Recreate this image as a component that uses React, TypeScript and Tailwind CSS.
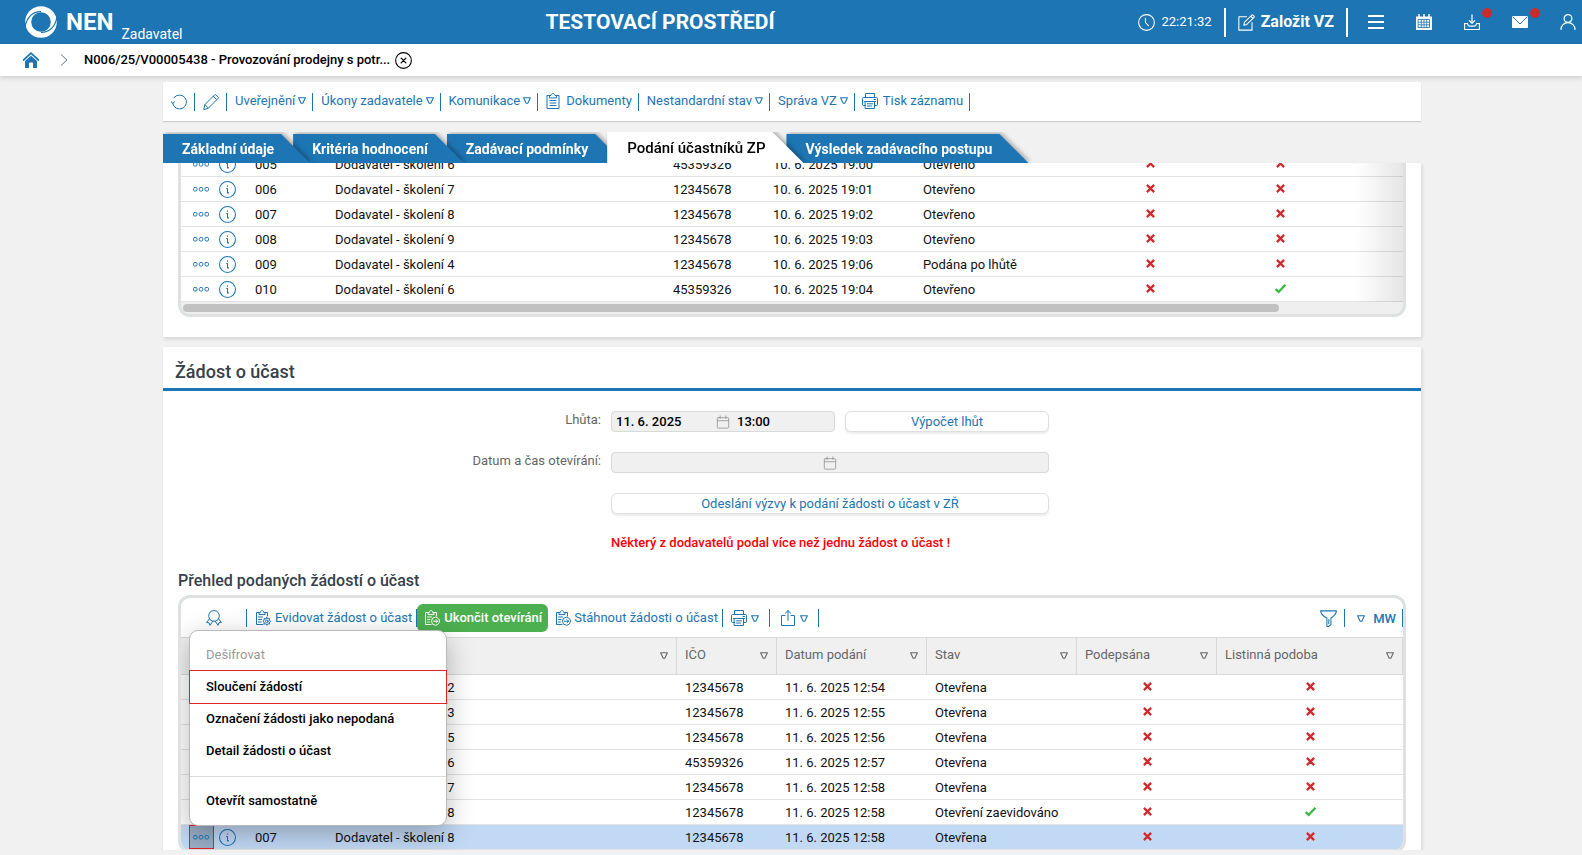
import type { ReactNode } from "react";
import clsx from "clsx";

type IconProps = { className?: string };

function Icon({ className, children }: { className?: string; children: ReactNode }) {
  return (
    <svg
      viewBox="0 0 16 16"
      className={clsx("shrink-0", className || "size-4")}
      fill="none"
      stroke="currentColor"
      strokeLinecap="round"
      strokeLinejoin="round"
      aria-hidden="true"
    >
      {children}
    </svg>
  );
}

const Triangle = ({ className }: IconProps) => (
  <svg viewBox="0 0 8 7" className={clsx("h-[7px] w-2 shrink-0", className)} fill="none" stroke="currentColor" strokeWidth="1.1" strokeLinejoin="round" aria-hidden="true">
    <path d="M.6.8h6.8L4.8 6.2H3.200z" />
  </svg>
);

const RefreshIcon = () => (
  <Icon>
    <path d="M1.6 9.4A7 7 0 1 0 3 3.6M1.6 9.4 0 7.4M1.6 9.4 3.6 7.8" />
  </Icon>
);

const PencilIcon = () => (
  <Icon>
    <path d="M.8 15.2l1.1-4.6L11.6.9c.4-.4 1-.4 1.4 0l2.1 2.1c.4.4.4 1 0 1.4L5.4 14.1zM10.2 2.3l3.5 3.5M1.9 10.6l3.5 3.5" />
  </Icon>
);

const ClipboardIcon = () => (
  <Icon>
    <path d="M4.5 2.5H2v13h12v-13h-2.500M4.5 4.500v-2H6C6.300 1.300 7 .5 8 .5s1.700.8 2 2h1.500v2zM5 7.500h6M5 10h6M5 12.500h6" />
  </Icon>
);

const PrinterIcon = () => (
  <Icon>
    <path d="M3.500 4.500v-4h9v4M3.500 12.500h-2c-.6 0-1-.4-1-1v-6c0-.6.4-1 1-1h13c.6 0 1 .4 1 1v6c0 .6-.4 1-1 1h-2M3.500 8.500h9v7h-9zM2.500 8.500h11M5.500 10.800h5M5.500 13h4M12 6.500h1.500" />
  </Icon>
);

const ClipboardGearIcon = () => (
  <Icon>
    <path d="M4 2.500H1.500v12H8M12.500 6V2.500H10M4 4.200V2.500h1.300C5.500 1.300 6 .5 7 .5s1.500.8 1.700 2H10v1.700zM3.500 7h4M3.500 9.500h3M3.500 12h2.500" />
    <circle cx="11.800" cy="11.300" r="1.300" />
    <path d="M11.800 7.300l1 1.500 1.800-.2-.2 1.700 1.300 1-1.300 1 .2 1.700-1.800-.2-1 1.500-1-1.500-1.800.2.200-1.700-1.300-1 1.300-1-.2-1.700 1.800.2z" />
  </Icon>
);

const ClipboardArrowIcon = () => (
  <Icon>
    <path d="M4 2.500H1.500v12H7M12.500 6V2.500H10M4 4.200V2.500h1.300C5.500 1.300 6 .5 7 .5s1.500.8 1.700 2H10v1.700zM3.500 7h4M3.500 9.500h2.500M3.500 12h2" />
    <circle cx="11.500" cy="11.200" r="4" />
    <path d="M9.300 11.200h4.200M12 9.600l1.600 1.600L12 12.800" />
  </Icon>
);

const RibbonIcon = () => (
  <Icon>
    <path d="M4.800 10.300a5.400 5.400 0 1 1 6.400 0M3.500 8.700L.6 12.500l2.500.3.900 2.600 2.800-4.200M12.500 8.700l2.900 3.800-2.500.3-.9 2.600-2.800-4.200M5 10.500c2 1 4 1 6 0" />
  </Icon>
);

const ShareIcon = () => (
  <Icon>
    <path d="M5 5.500H1.500v10h13v-10H11M8 10.500v-10M5.300 3.200L8 .6l2.700 2.600" />
  </Icon>
);

const FilterIcon = () => (
  <Icon className="size-[17px]">
    <path d="M.5.800h15c-.2 2.300-1.700 4.600-5.200 6.700v6.300l-2.300 1.700h-1.500v-8C2.200 5.400.7 3.100.5.800zM8.300 9v4" />
  </Icon>
);

const CalendarIcon = () => (
  <Icon className="size-[14px] text-[#999]">
    <path d="M2.500 3h11c.6 0 1 .4 1 1v10c0 .6-.4 1-1 1h-11c-.6 0-1-.4-1-1V4c0-.6.4-1 1-1zM1.500 6.500h13M4.700 1v3M11.300 1v3" />
  </Icon>
);

const InfoIcon = () => (
  <Icon className="size-[17px]">
    <circle cx="8" cy="8" r="7.500" />
    <path d="M7.200 7H8v4.200h1M8 4.400v.6" />
  </Icon>
);

const DotsIcon = () => (
  <Icon>
    <rect x=".5" y="6.500" width="3.500" height="3.500" rx="1.200" />
    <rect x="6.300" y="6.500" width="3.500" height="3.500" rx="1.200" />
    <rect x="12" y="6.500" width="3.500" height="3.500" rx="1.200" />
  </Icon>
);

const Mark = ({ ok }: { ok?: boolean }) =>
  ok ? (
    <svg viewBox="0 0 10 10" className="mx-auto -mt-1 block size-[11px]" fill="none" stroke="#35b93a" strokeWidth="2" role="img" aria-label="Ano">
      <path d="M.6 5.500l2.700 2.600L9.500 1.600" />
    </svg>
  ) : (
    <svg viewBox="0 0 10 10" className="mx-auto -mt-1 block size-[9px]" fill="none" stroke="#cf2a2e" strokeWidth="2.500" role="img" aria-label="Ne">
      <path d="M1 1l8 8M9 1L1 9" />
    </svg>
  );

const Divider = () => <span className="h-[18px] w-px shrink-0 bg-[#1d75b3]" />;

const toolbar = [
  { label: "Uveřejnění", menu: true },
  { label: "Úkony zadavatele", menu: true },
  { label: "Komunikace", menu: true },
  { label: "Dokumenty", icon: <ClipboardIcon /> },
  { label: "Nestandardní stav", menu: true },
  { label: "Správa VZ", menu: true },
  { label: "Tisk záznamu", icon: <PrinterIcon /> },
];

const tabs = ["Základní údaje", "Kritéria hodnocení", "Zadávací podmínky", "Podání účastníků ZP", "Výsledek zadávacího postupu"];
const tabLayers = ["z-50", "z-40", "z-30", "z-60", "z-20"];

const offers = [
  { no: "005", name: "Dodavatel - školení 6", ico: "45359326", date: "10. 6. 2025 19:00", state: "Otevřeno" },
  { no: "006", name: "Dodavatel - školení 7", ico: "12345678", date: "10. 6. 2025 19:01", state: "Otevřeno" },
  { no: "007", name: "Dodavatel - školení 8", ico: "12345678", date: "10. 6. 2025 19:02", state: "Otevřeno" },
  { no: "008", name: "Dodavatel - školení 9", ico: "12345678", date: "10. 6. 2025 19:03", state: "Otevřeno" },
  { no: "009", name: "Dodavatel - školení 4", ico: "12345678", date: "10. 6. 2025 19:06", state: "Podána po lhůtě" },
  { no: "010", name: "Dodavatel - školení 6", ico: "45359326", date: "10. 6. 2025 19:04", state: "Otevřeno", paper: true },
];

const requests = [
  { no: "001", name: "Dodavatel - školení 2", ico: "12345678", date: "11. 6. 2025 12:54", state: "Otevřena" },
  { no: "002", name: "Dodavatel - školení 3", ico: "12345678", date: "11. 6. 2025 12:55", state: "Otevřena" },
  { no: "003", name: "Dodavatel - školení 5", ico: "12345678", date: "11. 6. 2025 12:56", state: "Otevřena" },
  { no: "004", name: "Dodavatel - školení 6", ico: "45359326", date: "11. 6. 2025 12:57", state: "Otevřena" },
  { no: "005", name: "Dodavatel - školení 7", ico: "12345678", date: "11. 6. 2025 12:58", state: "Otevřena" },
  { no: "006", name: "Dodavatel - školení 8", ico: "12345678", date: "11. 6. 2025 12:58", state: "Otevření zaevidováno", paper: true },
  { no: "007", name: "Dodavatel - školení 8", ico: "12345678", date: "11. 6. 2025 12:58", state: "Otevřena" },
];

function Header() {
  return (
    <header className="flex h-11 shrink-0 items-center justify-between bg-[#1d75b3] pr-[6px] pl-6 text-white">
      <a href="#" className="flex items-center">
        <svg viewBox="0 0 34 34" className="size-[34px]" aria-hidden="true">
          <circle cx="17" cy="17" r="12.800" fill="none" stroke="#fff" strokeWidth="6" />
          <path d="M1 22C2.500 13 8 6.500 17 6.600" fill="none" stroke="#1d75b3" strokeWidth="1.300" />
          <path d="M33 12C31.500 21 26 27.500 17 27.400" fill="none" stroke="#1d75b3" strokeWidth="1.300" />
        </svg>
        <span className="ml-2 text-[24px] leading-7 font-bold">NEN</span>
        <span className="mt-6 ml-2 text-[14px] leading-5">Zadavatel</span>
      </a>
      <strong className="text-[21px] leading-6 font-bold">TESTOVACÍ PROSTŘEDÍ</strong>
      <div className="flex items-center">
        <Icon className="size-[17px]">
          <circle cx="8" cy="8" r="7.400" />
          <path d="M7 4v4l2.800 3" />
        </Icon>
        <span className="ml-[7px] text-[13px]">22:21:32</span>
        <span className="ml-3 h-[29px] w-0.5 bg-white" />
        <button type="button" className="ml-3 flex items-center gap-[6px] text-[16px] leading-5 font-bold">
          <Icon className="size-[17px]">
            <path d="M8 2.500H.8v12.700h12.400V8M5.500 10.500l.7-2.800L13 1c.3-.3.800-.3 1.100 0l1 1c.3.300.3.800 0 1.100L8.300 9.800zM12 2l2 2" />
          </Icon>
          Založit VZ
        </button>
        <span className="ml-3 h-[29px] w-0.5 bg-white" />
        <div className="ml-5 flex items-center gap-8">
          <button type="button" aria-label="Nabídka">
            <Icon>
              <path d="M0 2h16M0 8h16M0 14h16" strokeWidth="2" strokeLinecap="butt" />
            </Icon>
          </button>
          <button type="button" aria-label="Kalendář">
            <Icon>
              <path d="M0 2.500h16V16H0z" fill="#fff" stroke="none" />
              <path d="M3 .5v3M8 .5v3M13 .5v3" strokeWidth="1.500" />
              <path d="M2.500 5.500h11v8h-11zM2.500 8.200h11M2.500 10.800h11M5.300 5.500v8M8 5.500v8M10.700 5.500v8" stroke="#1d75b3" strokeWidth=".8" />
            </Icon>
          </button>
          <button type="button" aria-label="Stažené soubory" className="relative">
            <Icon>
              <path d="M8 .8v8.400M5.300 6.600L8 9.300l2.700-2.700M3.500 9.500H.6v6h14.800v-6h-2.900c-.4 2-1.300 2.700-2.500 2.700H6c-1.200 0-2.100-.7-2.500-2.700z" strokeWidth="1.200" />
            </Icon>
            <span className="absolute -top-[6px] -right-3 size-[10px] rounded-full bg-[#cb2b2e]" />
          </button>
          <button type="button" aria-label="Zprávy" className="relative">
            <Icon>
              <path d="M0 3c0-.5.400-1 1-1h14c.6 0 1 .5 1 1v10c0 .600-.4 1-1 1H1c-.6 0-1-.4-1-1z" fill="#fff" stroke="none" />
              <path d="M1 3l7 7 7-7" stroke="#1d75b3" />
            </Icon>
            <span className="absolute -top-[6px] -right-3 size-[10px] rounded-full bg-[#cb2b2e]" />
          </button>
          <button type="button" aria-label="Uživatel">
            <Icon>
              <circle cx="8" cy="4.500" r="3.900" strokeWidth="1.200" />
              <path d="M1 15.500c0-4 3-6.800 7-6.800s7 2.800 7 6.800" strokeWidth="1.200" />
            </Icon>
          </button>
        </div>
      </div>
    </header>
  );
}

function Breadcrumb() {
  return (
    <nav className="relative z-70 flex h-8 shrink-0 items-center bg-white pl-[23px] text-[13px] font-medium text-black shadow-[0_2px_5px_rgba(0,0,0,0.15)]">
      <a href="#" aria-label="Domů" className="text-[#1d75b3]">
        <svg viewBox="0 0 16 16" className="size-4" aria-hidden="true">
          <path d="M.5 8L8 1.200 15.500 8" fill="none" stroke="currentColor" strokeWidth="1.700" strokeLinecap="round" />
          <path d="M2 9l6-5.300L14 9v7h-4v-4.500c0-.6-.4-1-1-1H7c-.6 0-1 .4-1 1V16H2z" fill="currentColor" />
        </svg>
      </a>
      <svg viewBox="0 0 8 12" className="ml-[21px] h-3 w-2 text-gray-500" fill="none" stroke="currentColor" aria-hidden="true">
        <path d="M1 .5L7 6l-6 5.500" />
      </svg>
      <a href="#" className="ml-4">
        N006/25/V00005438 - Provozování prodejny s potr...
      </a>
      <button type="button" aria-label="Zavřít" className="ml-[5px]">
        <Icon className="size-[17px]">
          <circle cx="8" cy="8" r="7.400" />
          <path d="M5.800 5.800l4.400 4.400M10.200 5.800l-4.400 4.400" strokeWidth="1.200" />
        </Icon>
      </button>
    </nav>
  );
}

function RecordToolbar() {
  return (
    <div className="mt-[6px] flex h-[39px] shrink-0 items-center bg-white pl-2 text-[#1d75b3] shadow-[0_1px_1px_rgba(0,0,0,0.15)]">
      <button type="button" aria-label="Obnovit" className="pr-[7px]">
        <RefreshIcon />
      </button>
      <Divider />
      <button type="button" aria-label="Upravit" className="pr-[7px] pl-2">
        <PencilIcon />
      </button>
      <Divider />
      {toolbar.map((item) => (
        <div key={item.label} className="flex items-center">
          <button
            type="button"
            className={clsx("flex items-center pr-[6px] pb-0.5", item.icon ? "gap-[5px] pl-[7px]" : "gap-[3px] pl-2")}
          >
            {item.icon}
            {item.label}
            {item.menu && <Triangle />}
          </button>
          <Divider />
        </div>
      ))}
    </div>
  );
}

function Tabs() {
  return (
    <div role="tablist" className="mt-[11px] flex h-[31px] shrink-0 items-end overflow-hidden">
      {tabs.map((tab, i) => {
        const active = i === 3;
        return (
          <div
            key={tab}
            className={clsx("relative drop-shadow-[2px_-1px_2px_rgba(0,0,0,0.3)]", tabLayers[i], i > 0 && "-ml-[17px]")}
          >
            <button
              type="button"
              role="tab"
              aria-selected={active}
              className={clsx(
                "block whitespace-nowrap",
                active
                  ? "h-[31px] bg-white pr-[38px] pl-5 text-[15px] font-medium text-black [clip-path:polygon(0_0,calc(100%-31px)_0,100%_100%,0_100%)]"
                  : "h-[29px] bg-[#1d75b3] pr-9 pl-[19px] text-[14px] font-bold text-white [clip-path:polygon(0_0,calc(100%-29px)_0,100%_100%,0_100%)]"
              )}
            >
              {tab}
            </button>
          </div>
        );
      })}
    </div>
  );
}

const rowCells = "*:border-b *:border-[#e2e2e2] *:px-2 *:pt-0.5";

function OffersCard() {
  return (
    <section className="shrink-0 overflow-hidden bg-white px-[15px] pb-5 shadow-[1px_2px_4px_rgba(0,0,0,0.12)]">
      {/* the grid is scrolled, its first row sits partly under the tabs */}
      <div className="relative -mt-[11px] overflow-hidden rounded-b-xl border-x-3 border-b-3 border-[#dfe1e1] bg-[#efefef]">
        <table className="w-full table-fixed border-separate border-spacing-0 bg-white">
          <colgroup>
            <col className="w-[34px]" />
            <col className="w-8" />
            <col className="w-20" />
            <col />
            <col className="w-[100px]" />
            <col className="w-[150px]" />
            <col className="w-[170px]" />
            <col className="w-[130px]" />
            <col className="w-[188px]" />
          </colgroup>
          <tbody>
            {offers.map((row) => (
              <tr key={row.no} className={clsx("h-[25px]", rowCells)}>
                <td className="pt-0! text-[#1d75b3]">
                  <button type="button" aria-label={"Akce " + row.no} className="ml-1 block">
                    <DotsIcon />
                  </button>
                </td>
                <td className="pt-0! text-[#1d75b3]">
                  <button type="button" aria-label={"Detail " + row.no} className="-ml-1 block">
                    <InfoIcon />
                  </button>
                </td>
                <td>{row.no}</td>
                <td>{row.name}</td>
                <td>{row.ico}</td>
                <td>{row.date}</td>
                <td>{row.state}</td>
                <td>
                  <Mark />
                </td>
                <td className="pr-[66px]!">
                  <Mark ok={row.paper} />
                </td>
              </tr>
            ))}
          </tbody>
        </table>
        <div className="absolute top-0 right-0 bottom-3 w-12 bg-linear-to-r from-transparent to-black/10" />
        <div className="flex h-3 items-center px-0.5">
          <div className="h-2 w-[90%] rounded-full bg-[#c1c1c1]" />
        </div>
      </div>
    </section>
  );
}

const boxButton =
  "h-[21px] w-full rounded-md border border-[#e0e0e0] bg-white text-[#1d75b3] shadow-[0_2px_2px_rgba(0,0,0,0.08)]";

function DeadlineForm() {
  return (
    <form className="grid grid-cols-[448px_438px] gap-y-5 pt-5">
      <label htmlFor="deadline" className="pr-[10px] text-right leading-[18px] text-[#666]">
        Lhůta:
      </label>
      <div className="flex gap-[10px]">
        <div className="flex h-[21px] w-56 shrink-0 items-center rounded-sm border border-[#d9d9d9] bg-[#f0f0f0] pl-1 font-medium text-black">
          <input id="deadline" readOnly value="11. 6. 2025" className="w-[100px]" />
          <CalendarIcon />
          <input aria-label="Čas" readOnly value="13:00" className="ml-[7px] w-20" />
        </div>
        <button type="button" className={boxButton}>
          Výpočet lhůt
        </button>
      </div>
      <label htmlFor="opening" className="pr-[10px] text-right leading-[18px] text-[#666]">
        Datum a čas otevírání:
      </label>
      <div className="flex h-[21px] items-center justify-center rounded-sm border border-[#d9d9d9] bg-[#f0f0f0]">
        <input id="opening" readOnly value="" className="w-0 flex-1" />
        <CalendarIcon />
        <input aria-label="Čas otevírání" readOnly value="" className="w-0 flex-1" />
      </div>
      <button type="button" className={clsx(boxButton, "col-start-2")}>
        Odeslání výzvy k podání žádosti o účast v ZŘ
      </button>
      <p className="col-start-2 leading-[18px] font-medium text-[#fb0007]">
        Některý z dodavatelů podal více než jednu žádost o účast !
      </p>
    </form>
  );
}

function RowMenu() {
  const item = "block h-8 w-full px-4 text-left leading-8 font-medium text-black";
  return (
    <div
      role="menu"
      className="absolute bottom-full left-2 z-10 -mb-px w-[258px] rounded-[9px] border border-[#b9b9b9] bg-white py-2 shadow-[0_8px_28px_rgba(0,0,0,0.28)]"
    >
      <button type="button" role="menuitem" disabled className="block h-8 w-full px-4 text-left leading-8 text-[#999]">
        Dešifrovat
      </button>
      <button type="button" role="menuitem" className={clsx(item, "outline outline-[#e0242c]")}>
        Sloučení žádostí
      </button>
      <button type="button" role="menuitem" className={item}>
        Označení žádosti jako nepodaná
      </button>
      <button type="button" role="menuitem" className={item}>
        Detail žádosti o účast
      </button>
      <hr className="mt-[9px] mb-2 border-[#dcdcdc]" />
      <button type="button" role="menuitem" className={item}>
        Otevřít samostatně
      </button>
    </div>
  );
}

function RequestsToolbar() {
  return (
    <div className="flex h-[39px] items-center pt-px text-[#1d75b3]">
      <button type="button" aria-label="Otevření" className="pr-6 pl-[25px]">
        <RibbonIcon />
      </button>
      <Divider />
      <button type="button" className="flex items-center gap-1 pr-1 pl-2">
        <ClipboardGearIcon />
        Evidovat žádost o účast
      </button>
      <Divider />
      <button type="button" className="flex h-7 items-center gap-1 rounded-md bg-[#4caf50] pr-[6px] pl-[7px] font-medium text-white">
        <ClipboardArrowIcon />
        Ukončit otevírání
      </button>
      <button type="button" className="flex items-center gap-[3px] pr-1 pl-[7px]">
        <ClipboardArrowIcon />
        Stáhnout žádosti o účast
      </button>
      <Divider />
      <button type="button" aria-label="Tisk" className="flex items-center gap-1 pr-[10px] pl-2">
        <PrinterIcon />
        <Triangle />
      </button>
      <Divider />
      <button type="button" aria-label="Export" className="flex items-center gap-1 px-[10px]">
        <ShareIcon />
        <Triangle />
      </button>
      <Divider />
      <div className="ml-auto flex items-center">
        <button type="button" aria-label="Filtr" className="pr-[7px]">
          <FilterIcon />
        </button>
        <Divider />
        <button type="button" className="flex items-center gap-2 pr-[6px] pl-3">
          <Triangle />
          <span className="pt-0.5 font-medium">MW</span>
        </button>
        <Divider />
      </div>
    </div>
  );
}

function RequestsTable() {
  return (
    <table className="w-full table-fixed border-separate border-spacing-0">
      <colgroup>
        <col className="w-[34px]" />
        <col className="w-8" />
        <col className="w-20" />
        <col />
        <col className="w-[100px]" />
        <col className="w-[150px]" />
        <col className="w-[150px]" />
        <col className="w-[140px]" />
        <col className="w-[186px]" />
      </colgroup>
      <thead>
        <tr className="h-[38px] bg-[#f0f0f0] text-left text-[#666] *:border-y *:border-[#d9d9d9] *:px-2 *:font-normal">
          <th colSpan={3} aria-label="Číslo" />
          {["", "IČO", "Datum podání", "Stav", "Podepsána", "Listinná podoba"].map((head) => (
            <th key={head} className="border-r" aria-label={head || "Dodavatel"}>
              <div className="flex items-center justify-between pb-0.5">
                <span>{head}</span>
                <Triangle />
              </div>
            </th>
          ))}
        </tr>
      </thead>
      <tbody>
        {requests.map((row) => {
          const selected = row.no === "007";
          return (
            <tr key={row.no} className={clsx("h-[25px]", rowCells, selected && "bg-[#c2d9f5]")}>
              <td className={clsx("pt-0! text-[#1d75b3]", selected && "relative px-0!")}>
                {selected && <RowMenu />}
                <button
                  type="button"
                  aria-label={"Akce " + row.no}
                  className={clsx(
                    "block",
                    selected ? "ml-2 h-6 w-[25px] border border-[#e0242c] bg-[#9aaec6] px-[3px]" : "ml-1"
                  )}
                >
                  <DotsIcon />
                </button>
              </td>
              <td className="pt-0! text-[#1d75b3]">
                <button type="button" aria-label={"Detail " + row.no} className="-ml-1 block">
                  <InfoIcon />
                </button>
              </td>
              <td>{row.no}</td>
              <td>{row.name}</td>
              <td>{row.ico}</td>
              <td>{row.date}</td>
              <td>{row.state}</td>
              <td>
                <Mark />
              </td>
              <td>
                <Mark ok={row.paper} />
              </td>
            </tr>
          );
        })}
      </tbody>
    </table>
  );
}

export default function App() {
  return (
    <div className="flex h-screen flex-col overflow-hidden bg-[#f1f1f1] pb-[5px] font-[Roboto,sans-serif] text-[13px] leading-[18px] text-[#111]">
      <Header />
      <Breadcrumb />
      <div className="min-h-0 flex-1 overflow-hidden pl-0.5">
        <main className="mx-auto flex w-full max-w-[1258px] flex-col">
          <RecordToolbar />
          <Tabs />
          <OffersCard />
          <section className="mt-[10px] bg-white shadow-[1px_2px_4px_rgba(0,0,0,0.12)]">
            <h2 className="flex h-11 items-center border-b-3 border-[#1d75b3] px-3 pt-2 text-[18px] font-medium text-[#36404a]">
              Žádost o účast
            </h2>
            <DeadlineForm />
            <div className="px-[15px] pt-[19px]">
              <h3 className="mb-1 text-[16px] leading-5 font-medium text-[#36404a]">Přehled podaných žádostí o účast</h3>
              <div className="overflow-hidden rounded-xl border-3 border-[#dfe1e1]">
                <RequestsToolbar />
                <RequestsTable />
              </div>
            </div>
          </section>
        </main>
      </div>
    </div>
  );
}
